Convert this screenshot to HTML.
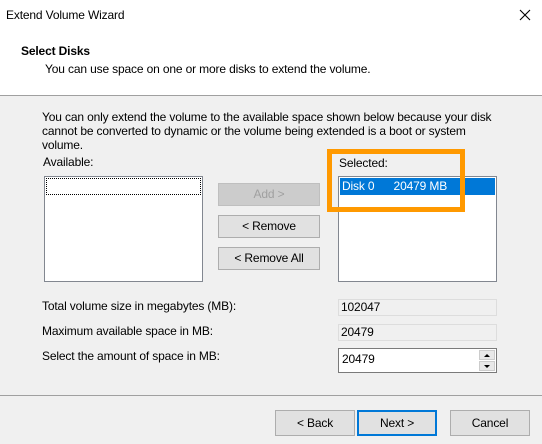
<!DOCTYPE html>
<html><head><meta charset="utf-8"><style>
*{margin:0;padding:0;box-sizing:border-box}
body{width:542px;height:444px;background:#f0f0f0;font-family:"Liberation Sans",sans-serif;font-size:12px;letter-spacing:-0.15px;color:#000;position:relative;overflow:hidden}
.a{position:absolute;white-space:nowrap}
.hdr{position:absolute;left:0;top:0;width:542px;height:96px;background:#fff;border-bottom:1px solid #a0a0a0}
.lb{position:absolute;background:#fff;border:1px solid #828790}
.btn{position:absolute;border:1px solid #adadad;background:#e1e1e1;text-align:center;line-height:20px}
.fld{position:absolute;border:1px solid #ddd;background:#f0f0f0;padding-left:2px;line-height:15px}
</style></head><body>
<div class="hdr"></div>
<div class="a" style="left:6px;top:8px">Extend Volume Wizard</div>
<svg class="a" style="left:519px;top:9px" width="12" height="12"><path d="M1 1L11 11M11 1L1 11" stroke="#000" stroke-width="1.1"/></svg>
<div class="a" style="left:21px;top:44px;font-weight:bold">Select Disks</div>
<div class="a" style="left:45px;top:62px">You can use space on one or more disks to extend the volume.</div>
<div class="a" style="left:42px;top:110px;line-height:14px;letter-spacing:-0.15px">You can only extend the volume to the available space shown below because your disk<br>cannot be converted to dynamic or the volume being extended is a boot or system<br>volume.</div>
<div class="a" style="left:43px;top:155px">Available:</div>
<div class="lb" style="left:44px;top:176px;width:159px;height:106px"><div style="position:absolute;left:1px;top:1px;right:1px;height:17px;border:1px dotted #000"></div></div>
<div class="btn" style="left:218px;top:183px;width:102px;height:23px;color:#a0a0a0;background:#ccc;border-color:#bfbfbf">Add &gt;</div>
<div class="btn" style="left:218px;top:215px;width:102px;height:23px">&lt; Remove</div>
<div class="btn" style="left:218px;top:247px;width:102px;height:23px">&lt; Remove All</div>
<div class="a" style="left:339px;top:156px">Selected:</div>
<div class="lb" style="left:338px;top:176px;width:159px;height:106px"><div style="position:absolute;left:1px;top:1px;right:1px;height:17px;background:#0078d7;color:#fff;line-height:17px;padding-left:2px">Disk 0&nbsp;&nbsp;&nbsp;&nbsp;&nbsp;&nbsp;20479 MB</div></div>
<div class="a" style="left:327px;top:149px;width:138px;height:63px;border:5px solid #ff9900"></div>
<div class="a" style="left:42px;top:299px">Total volume size in megabytes (MB):</div>
<div class="a" style="left:42px;top:324px">Maximum available space in MB:</div>
<div class="a" style="left:42px;top:349px">Select the amount of space in MB:</div>
<div class="fld" style="left:338px;top:299px;width:159px;height:17px">102047</div>
<div class="fld" style="left:338px;top:324px;width:159px;height:17px">20479</div>
<div class="a" style="left:338px;top:348px;width:159px;height:25px;background:#fff;border:1px solid #7a7a7a;padding:3px 0 0 3px">20479
<div style="position:absolute;right:1px;top:1px;width:16px;height:10px;background:#e8e8e8;border:1px solid #ccc"><svg width="14" height="8" style="position:absolute;left:0;top:0"><path d="M4 6L7 3L10 6Z" fill="#000"/></svg></div>
<div style="position:absolute;right:1px;top:12px;width:16px;height:10px;background:#e8e8e8;border:1px solid #ccc"><svg width="14" height="8" style="position:absolute;left:0;top:0"><path d="M4 3L7 6L10 3Z" fill="#000"/></svg></div>
</div>
<div class="a" style="left:0;top:395px;width:542px;height:1px;background:#a0a0a0"></div>
<div class="btn" style="left:275px;top:410px;width:80px;height:26px;line-height:24px">&lt; Back</div>
<div class="btn" style="left:357px;top:410px;width:80px;height:26px;border:2px solid #0078d7;line-height:22px">Next &gt;</div>
<div class="btn" style="left:450px;top:410px;width:80px;height:26px;line-height:24px">Cancel</div>
</body></html>
